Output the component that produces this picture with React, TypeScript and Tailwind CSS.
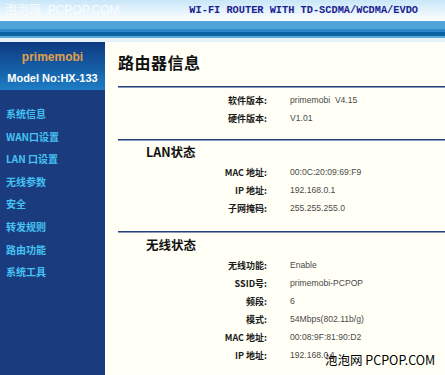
import React from "react";

const sans = { fontFamily: '"Liberation Sans", Arial, "Noto Sans CJK SC", sans-serif' };
const cjk = { fontFamily: '"Noto Sans CJK SC", "Liberation Sans", sans-serif' };

const menu = ["系统信息", "WAN口设置", "LAN 口设置", "无线参数", "安全", "转发规则", "路由功能", "系统工具"];

function Row({ label, value }: { label: string; value: string }) {
  return (
    <div className="flex h-[18px] items-center">
      <div className="w-[149px] text-right text-[9px] font-bold text-[#1a1a1a] leading-none" style={cjk}>
        {label}
      </div>
      <div className="pl-[23px] text-[8.6px] text-[#4a4a4a] leading-none whitespace-pre" style={sans}>
        {value}
      </div>
    </div>
  );
}

function Line() {
  return <div className="h-[2px] bg-[#22427a] border-b border-[#8a9ab8]" />;
}

export default function App() {
  return (
    <div className="relative w-[445px] h-[375px] overflow-hidden bg-[#fffff6]">
      {/* header */}
      <div className="h-[21px] bg-gradient-to-b from-[#c8e6f8] to-[#ffffff] flex items-center justify-end pr-[27px]">
        <span className="text-[10.3px] font-bold text-[#1a2290] leading-none" style={{ fontFamily: '"Liberation Mono", "Courier New", monospace' }}>
          WI-FI ROUTER WITH TD-SCDMA/WCDMA/EVDO
        </span>
      </div>
      {/* blue bar */}
      <div className="h-[8px] bg-[#50a4da]" />
      <div className="h-[3px] bg-[#2c88c8]" />
      <div className="h-[4px] bg-[#0a62a2]" />
      <div className="h-[2px] bg-[#5aa8dc]" />
      <div className="h-[4px] bg-[#e4f2fb]" />

      {/* body */}
      <div className="flex h-[333px]">
        <div className="w-[105px] bg-[#1a3c7e] flex flex-col">
          <div className="h-[48px] bg-gradient-to-b from-[#0e3a80] to-[#1e7ec6] flex flex-col items-center pt-[8px]">
            <div className="text-[12px] font-bold text-[#e0a04c] leading-[14px]" style={sans}>primemobi</div>
            <div className="mt-[8px] text-[11px] font-bold text-white leading-[13px]" style={sans}>Model No:HX-133</div>
          </div>
          <div className="flex flex-col pt-[12.7px] pl-[6px]">
            {menu.map((m) => (
              <div key={m} className="h-[22.6px] flex items-center text-[10px] font-bold text-[#46c2f2] leading-none" style={cjk}>
                {m}
              </div>
            ))}
          </div>
        </div>

        <div className="flex-1 pl-[13px]">
          <div className="pt-[10px] h-[44px]">
            <div className="text-[16px] font-bold text-[#111] leading-[20px] tracking-[0.5px]" style={cjk}>路由器信息</div>
          </div>
          <Line />
          <div className="pt-[3px]">
            <Row label="软件版本:" value="primemobi  V4.15" />
            <Row label="硬件版本:" value="V1.01" />
          </div>
          <div className="mt-[12px]">
            <Line />
          </div>
          <div className="pt-[2px] pl-[28px] h-[20px] flex items-center text-[12.5px] font-bold text-[#111] leading-none" style={cjk}>
            LAN状态
          </div>
          <div className="pt-[2px]">
            <Row label="MAC 地址:" value="00:0C:20:09:69:F9" />
            <Row label="IP 地址:" value="192.168.0.1" />
            <Row label="子网掩码:" value="255.255.255.0" />
          </div>
          <div className="mt-[14px]">
            <Line />
          </div>
          <div className="pt-[3px] pl-[28px] h-[21px] flex items-center text-[12.5px] font-bold text-[#111] leading-none" style={cjk}>
            无线状态
          </div>
          <div className="pt-[2px]">
            <Row label="无线功能:" value="Enable" />
            <Row label="SSID号:" value="primemobi-PCPOP" />
            <Row label="频段:" value="6" />
            <Row label="模式:" value="54Mbps(802.11b/g)" />
            <Row label="MAC 地址:" value="00:08:9F:81:90:D2" />
            <Row label="IP 地址:" value="192.168.0.1" />
          </div>
        </div>
      </div>

      {/* watermarks */}
      <div className="absolute left-[5px] top-[3px] text-[12px] text-white/80 leading-[14px] whitespace-pre" style={sans}>
        泡泡网  PCPOP.COM
      </div>
      <div className="absolute left-[325px] top-[353px] text-[12.5px] text-black leading-[14px] whitespace-pre" style={cjk}>
        泡泡网 PCPOP.COM
      </div>
    </div>
  );
}
